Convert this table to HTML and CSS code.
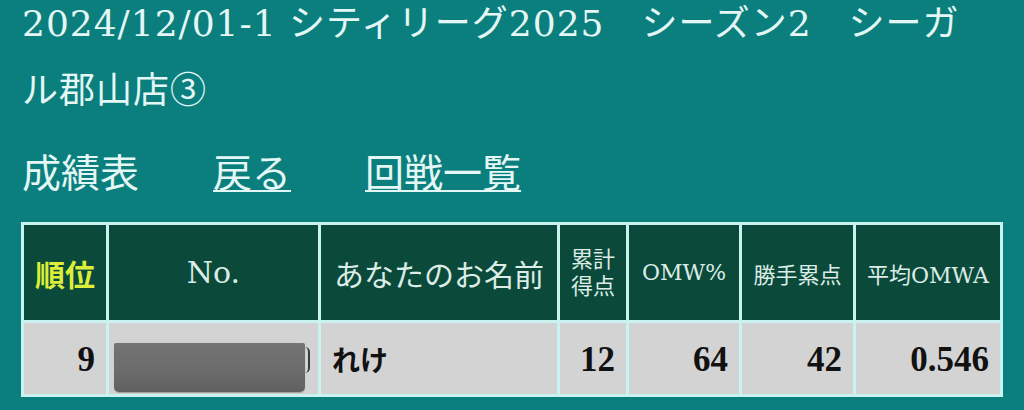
FILE: index.html
```html
<!DOCTYPE html>
<html lang="ja">
<head>
<meta charset="utf-8">
<title>成績表</title>
<link rel="stylesheet" href="styles.css">
</head>
<body>
<div class="page">
  <h1 class="title">2024/12/01-1 シティリーグ2025　シーズン2　シーガル郡山店③</h1>
  <nav class="nav">
    <span class="nav-current">成績表</span>
    <a class="nav-link" href="#">戻る</a>
    <a class="nav-link" href="#">回戦一覧</a>
  </nav>
  <table class="results">
    <colgroup>
      <col class="col-rank">
      <col class="col-no">
      <col class="col-name">
      <col class="col-total">
      <col class="col-omw">
      <col class="col-win">
      <col class="col-avg">
    </colgroup>
    <thead>
      <tr>
        <th class="rank">順位</th>
        <th class="head-no">No.</th>
        <th class="head-name">あなたのお名前</th>
        <th class="small two-line">累計<br>得点</th>
        <th class="small">OMW%</th>
        <th class="small">勝手累点</th>
        <th class="small">平均OMWA</th>
      </tr>
    </thead>
    <tbody>
      <tr>
        <td class="num">9</td>
        <td class="no"><div class="redact-wrap"><div class="redact"></div><span class="peek"></span></div></td>
        <td class="name">れけ</td>
        <td class="num">12</td>
        <td class="num">64</td>
        <td class="num">42</td>
        <td class="num">0.546</td>
      </tr>
    </tbody>
  </table>
</div>
</body>
</html>
```

FILE: styles.css
```css
html, body {
  margin: 0;
  padding: 0;
  background: #0a7f7e;
}

body {
  font-family: "DejaVu Serif", "Noto Sans CJK JP", serif;
  color: #e4f7f5;
  overflow: hidden;
}

.page {
  padding: 0 21px;
  width: 982px;
}

.title {
  margin: -10px 0 0 0;
  padding-left: 1px;
  width: 968px;
  font-size: 36px;
  line-height: 67px;
  font-weight: normal;
  letter-spacing: 1px;
  color: #e4f7f5;
}

.nav {
  margin-top: 16px;
  height: 60px;
  line-height: 60px;
  font-size: 39px;
  display: flex;
  gap: 74px;
  padding-left: 1px;
  font-family: "Noto Sans CJK JP", sans-serif;
}

.nav-current {
  color: #e4f7f5;
}

.nav-link {
  color: #e4f7f5;
  text-decoration: underline;
  text-decoration-thickness: 2px;
  text-underline-offset: 3px;
}

.results {
  margin-top: 22px;
  width: 982px;
  table-layout: fixed;
  border-collapse: separate;
  border-spacing: 3px;
  background: #c8f3f1;
}

.col-rank { width: 82px; }
.col-no { width: 209px; }
.col-name { width: 236px; }
.col-total { width: 66px; }
.col-omw { width: 110px; }
.col-win { width: 111px; }
.col-avg { width: 144px; }

.results th,
.results td {
  box-sizing: border-box;
  padding: 0;
}

.results th {
  height: 95px;
  background: #0b4a3b;
  color: #dcece6;
  font-weight: normal;
  font-size: 30px;
  text-align: center;
  vertical-align: middle;
  white-space: nowrap;
}

.results th.rank {
  color: #dcee3a;
  font-weight: bold;
  font-family: "Noto Sans CJK JP", sans-serif;
}

.results th.small {
  font-size: 22px;
}

.results th.two-line {
  line-height: 27px;
}

.results td {
  height: 71px;
  background: #d3d3d3;
  color: #111111;
  font-size: 28px;
  font-weight: bold;
  vertical-align: middle;
}

.results td.num {
  text-align: right;
  padding: 2px 11px 0 0;
  font-family: "Liberation Serif", "Noto Sans CJK JP", serif;
  font-size: 35px;
}

.results td.name {
  text-align: left;
  padding-left: 11px;
  font-family: "Noto Sans CJK JP", sans-serif;
}

.results td.no {
  vertical-align: bottom;
  padding: 0 0 2px 5px;
}

.redact-wrap {
  display: flex;
  align-items: flex-start;
}

.redact {
  width: 191px;
  height: 49px;
  border-radius: 2px 2px 5px 5px;
  background: linear-gradient(180deg, #747474 0%, #6b6b6b 60%, #606060 100%);
  box-shadow: 0 1px 1px rgba(0, 0, 0, 0.25);
}

.peek {
  width: 3px;
  height: 26px;
  margin-top: 4px;
  border-right: 2px solid #3a3a3a;
  border-radius: 0 12px 12px 0;
}
```
